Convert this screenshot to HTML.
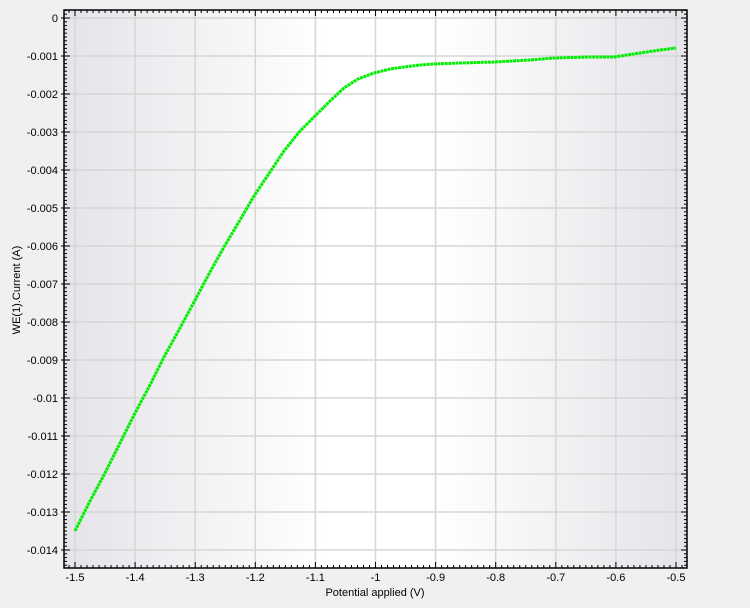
<!DOCTYPE html>
<html><head><meta charset="utf-8"><style>
body{margin:0;background:#f0f0f0;width:750px;height:608px;overflow:hidden;font-family:"Liberation Sans",sans-serif}
svg{display:block}
</style></head><body>
<svg id="s" width="750" height="608" xmlns="http://www.w3.org/2000/svg" font-family="Liberation Sans, sans-serif" font-size="11">
<defs><linearGradient id="g" x1="0" x2="1">
<stop offset="0" stop-color="#e4e4e9"/><stop offset="0.42" stop-color="#ffffff"/><stop offset="0.6" stop-color="#ffffff"/><stop offset="1" stop-color="#e4e4e9"/></linearGradient></defs>
<rect x="64" y="10" width="623" height="558" fill="url(#g)"/>
<g id="grid" stroke="#d6d6d6" stroke-width="1.5"></g>
<polyline fill="none" stroke="#00ee00" stroke-width="3" stroke-dasharray="3 0.6" stroke-linejoin="round" points="75,531 90,501 105,473 120,443 134,415 150,385 164,357 180,328 194,302 210,272 224,247 240,220 254,196 270,172 284,151 300,131 314,117 330,101 344,88 358,79 374,73 390,69 404,67 420,65 434,64 460,63 494,62 530,60 554,58 590,57 614,57 640,53 660,50 676,48"/>
<g id="ax" stroke="#000" fill="none"></g>
<g id="lb" fill="#000"></g>
<text x="375" y="596" text-anchor="middle" font-size="11">Potential applied (V)</text>
<text transform="translate(20,290) rotate(-90)" text-anchor="middle" font-size="11">WE(1).Current (A)</text>
</svg>
<script>
var ns="http://www.w3.org/2000/svg";
function el(p,t,a,txt){var e=document.createElementNS(ns,t);for(var k in a)e.setAttribute(k,a[k]);if(txt!=null)e.textContent=txt;document.getElementById(p).appendChild(e);}
var L=64,R=687,T=10,B=568;
for(var i=0;i<=10;i++){var x=75+i*60.1;el('grid','line',{x1:x,x2:x,y1:T,y2:B});
el('lb','text',{x:x,y:581,'text-anchor':'middle'},(i==10?'-0.5':(i==5?'-1':'-'+(1.5-i/10).toFixed(1))));}
for(var j=0;j<=14;j++){var y=18+j*38;el('grid','line',{x1:L,x2:R,y1:y,y2:y});
el('lb','text',{x:58,y:y+4,'text-anchor':'end'},j==0?'0':(j==10?'-0.01':'-'+(j/1000).toFixed(3).replace(/0+$/,'')));}
el('ax','rect',{x:L,y:T,width:R-L,height:B-T,'stroke-width':1.5});
for(var k=0;k<=103;k++){var x=75+k*6.01-6.01;if(x<L||x>R)continue;var m=(k-1)%10==0;
el('ax','line',{x1:x,x2:x,y1:B,y2:B-(m?6:3)});el('ax','line',{x1:x,x2:x,y1:T,y2:T+(m?6:3)});}
for(var k=-2;k<=150;k++){var y=18+k*3.8;if(y<T||y>B)continue;var m=k%10==0;
el('ax','line',{x1:L,x2:L+(m?6:3),y1:y,y2:y});el('ax','line',{x1:R,x2:R-(m?6:3),y1:y,y2:y});
if(m)el('ax','line',{x1:L,x2:L-3,y1:y,y2:y});}
</script>
</body></html>
